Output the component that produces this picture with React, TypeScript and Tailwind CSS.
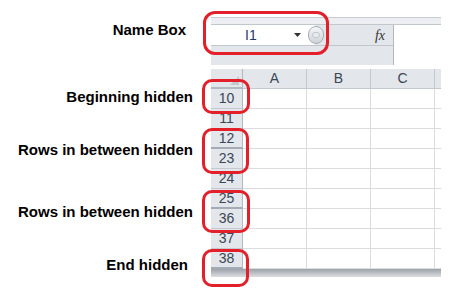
import React from 'react';

const rows = [
  { n: '10', hiddenBelow: false },
  { n: '11', hiddenBelow: false },
  { n: '12', hiddenBelow: true },
  { n: '23', hiddenBelow: false },
  { n: '24', hiddenBelow: false },
  { n: '25', hiddenBelow: true },
  { n: '36', hiddenBelow: false },
  { n: '37', hiddenBelow: false },
  { n: '38', hiddenBelow: true },
];

function Labels() {
  return (
    <div className="w-[211px] flex flex-col items-end text-[15px] leading-[17px] font-bold text-black">
      <div className="mt-[21px] h-[17px] pr-[25px]">Name Box</div>
      <div className="mt-[50px] h-[17px] pr-[18px]">Beginning hidden</div>
      <div className="mt-[36px] h-[17px] pr-[18px]">Rows in between hidden</div>
      <div className="mt-[45px] h-[17px] pr-[18px]">Rows in between hidden</div>
      <div className="mt-[36px] h-[17px] pr-[23px]">End hidden</div>
    </div>
  );
}

function FormulaBar() {
  return (
    <div className="flex h-[41px] border-t border-[#c2c7ce]">
      <div className="w-[182px] flex flex-col bg-[#e3e6ea]">
        <div className="h-[21px] flex border-b border-[#c2c7ce] relative">
          <div className="w-[104px] bg-white flex items-center">
            <span className="ml-[34px] text-[14px] text-[#1e3a6a]">I1</span>
            <svg className="ml-[37px]" width="7" height="4" viewBox="0 0 7 4">
              <path d="M0 0h7L3.5 4z" fill="#333" />
            </svg>
          </div>
          <div className="absolute left-[97px] top-[1px] w-[16px] h-[18px] rounded-full border border-[#a9aeb5] bg-gradient-to-b from-[#f4f5f7] to-[#cfd3d8] flex items-center justify-center">
            <div className="w-[8px] h-[6px] rounded-full bg-[#e9ebee] border border-[#c4c8cd]" />
          </div>
          <div className="flex-1 flex items-center justify-end pr-[8px]">
            <span className="text-[14px] italic text-[#333]" style={{ fontFamily: '"Liberation Serif", serif' }}>
              fx
            </span>
          </div>
        </div>
        <div className="flex-1" />
      </div>
      <div className="flex-1 bg-white border-l border-[#b3b8bf]" />
    </div>
  );
}

function Grid() {
  return (
    <div className="flex flex-col">
      <div className="flex h-[20px] bg-[#e3e6ea] text-[14px] text-[#3b4656]">
        <div className="w-[32px] border-r border-b-2 border-[#b3b9c1] relative">
          <svg className="absolute right-[3px] bottom-[2px]" width="9" height="9" viewBox="0 0 9 9">
            <path d="M9 0v9H0z" fill="#c3c7cd" />
          </svg>
        </div>
        {['A', 'B', 'C'].map((c) => (
          <div key={c} className="w-[64px] border-r border-b border-[#c4c9d0] flex items-center justify-center">
            {c}
          </div>
        ))}
        <div className="flex-1 border-b border-[#c4c9d0]" />
      </div>
      {rows.map((r) => (
        <div key={r.n} className="flex h-[20px]">
          <div
            className={`w-[32px] bg-[#e3e6ea] border-r border-[#b3b9c1] flex items-center justify-center text-[14px] text-[#3b4656] ${
              r.hiddenBelow ? 'border-b-2 border-b-[#a4abb4]' : 'border-b border-b-[#c4c9d0]'
            }`}
          >
            {r.n}
          </div>
          <div className="w-[64px] border-r border-b border-[#dadcdf]" />
          <div className="w-[64px] border-r border-b border-[#dadcdf]" />
          <div className="w-[64px] border-r border-b border-[#dadcdf]" />
          <div className="flex-1 border-b border-[#dadcdf]" />
        </div>
      ))}
      <div className="h-[8px] bg-gradient-to-b from-[#9da2a9] to-[#dcdee1]" />
    </div>
  );
}

function Mark({ className }: { className: string }) {
  return <div className={`absolute border-[3px] border-[#e3202a] rounded-[10px] ${className}`} />;
}

export default function App() {
  return (
    <div
      className="relative w-[450px] h-[294px] bg-white flex overflow-hidden"
      style={{ fontFamily: '"Liberation Sans", Arial, sans-serif' }}
    >
      <Labels />
      <div className="w-[230px] mt-[17px] flex flex-col">
        <div className="h-[7px] bg-[#eceef1] border-t border-[#c8ccd2]" />
        <FormulaBar />
        <div className="h-[4px] bg-white" />
        <Grid />
      </div>
      <Mark className="left-[203px] top-[11px] w-[126px] h-[44px] rounded-[12px]" />
      <Mark className="left-[202px] top-[79px] w-[48px] h-[35px]" />
      <Mark className="left-[202px] top-[128px] w-[47px] h-[46px]" />
      <Mark className="left-[202px] top-[190px] w-[48px] h-[43px]" />
      <Mark className="left-[202px] top-[249px] w-[47px] h-[38px]" />
    </div>
  );
}
